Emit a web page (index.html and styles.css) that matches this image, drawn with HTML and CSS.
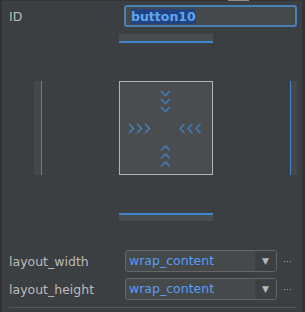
FILE: index.html
```html
<!DOCTYPE html>
<html lang="en">
<head>
<meta charset="UTF-8">
<title>Attributes</title>
<link rel="stylesheet" href="styles.css">
</head>
<body>

<div class="panel">
    <div class="top-strip"><div class="thumb"></div></div>

    <div class="id-row">
        <div class="label">ID</div>
        <div class="id-input"><span class="selected">button10</span></div>
    </div>

    <div class="widget">
        <div></div>
        <div class="bar-h bar-top"></div>
        <div></div>

        <div class="bar-v bar-left"></div>
        <div class="view-box">
            <svg width="92" height="92" viewBox="0 0 92 92">
                <g fill="none" stroke="#3f7cbd" stroke-width="1.7">
                    <polyline points="41,9 45.5,13.5 50,9"/>
                    <polyline points="41,17 45.5,21.5 50,17"/>
                    <polyline points="41,25 45.5,29.5 50,25"/>
                    <polyline points="41,68.5 45.5,64 50,68.5"/>
                    <polyline points="41,76.5 45.5,72 50,76.5"/>
                    <polyline points="41,84.5 45.5,80 50,84.5"/>
                    <polyline points="9,42 13.5,46.5 9,51"/>
                    <polyline points="17,42 21.5,46.5 17,51"/>
                    <polyline points="25,42 29.5,46.5 25,51"/>
                    <polyline points="64.5,42 60,46.5 64.5,51"/>
                    <polyline points="72.5,42 68,46.5 72.5,51"/>
                    <polyline points="80.5,42 76,46.5 80.5,51"/>
                </g>
            </svg>
        </div>
        <div class="bar-v bar-right"></div>

        <div></div>
        <div class="bar-h bar-bottom"></div>
        <div></div>
    </div>

    <div class="attrs">
        <div class="attr-row">
            <div class="label">layout_width</div>
            <div class="combo">
                <span class="combo-value">wrap_content</span>
                <span class="combo-arrow">&#9660;</span>
            </div>
            <span class="more"><i></i><i></i><i></i></span>
        </div>
        <div class="attr-row">
            <div class="label">layout_height</div>
            <div class="combo">
                <span class="combo-value">wrap_content</span>
                <span class="combo-arrow">&#9660;</span>
            </div>
            <span class="more"><i></i><i></i><i></i></span>
        </div>
    </div>

    <div class="rule"></div>
</div>

</body>
</html>
```

FILE: styles.css
```css
body {
    margin: 0;
    font-family: "DejaVu Sans", sans-serif;
    font-size: 12.5px;
    background-color: #3c3f41;
}

.panel {
    width: 300px;
    height: 312px;
    background-color: #3c3f41;
    border-left: 2px solid #2f3133;
    border-right: 3px solid #313335;
    color: #bbbbbb;
    overflow: hidden;
}

.top-strip {
    height: 1px;
    background-color: #323436;
    display: flex;
}

.top-strip .thumb {
    width: 21px;
    margin-left: 226px;
    background-color: #8a8c8e;
}

.label {
    flex: 0 0 122px;
    padding-left: 7px;
    box-sizing: border-box;
}

/* ID row */
.id-row {
    display: flex;
    align-items: center;
    margin-top: 4px;
    height: 22px;
}

.id-input {
    width: 173px;
    height: 22px;
    box-sizing: border-box;
    border: 2px solid #4a80b8;
    border-radius: 3px;
    background-color: #45494a;
    display: flex;
    align-items: center;
    padding-left: 5px;
}

.id-input .selected {
    background-color: #214283;
    color: #5ea7f0;
    line-height: 15px;
    font-weight: bold;
}

/* constraint widget */
.widget {
    display: grid;
    grid-template-columns: 8px 94px 7px;
    grid-template-rows: 9px 94px 8px;
    column-gap: 77px;
    row-gap: 38px;
    margin-top: 7px;
    padding-left: 32px;
}

.bar-h {
    background-color: #4a4d4f;
}

.bar-top {
    border-bottom: 2px solid #3f86cf;
}

.bar-bottom {
    border-top: 2px solid #3f86cf;
}

.bar-v {
    background-color: #45484a;
}

.bar-left {
    border-right: 1px solid #3f86cf;
}

.bar-right {
    border-left: 1px solid #3f86cf;
}

.view-box {
    border: 1px solid #b4b4b4;
    background-color: #4a4c4d;
}

.view-box svg {
    display: block;
}

/* attributes */
.attrs {
    margin-top: 29px;
    display: flex;
    flex-direction: column;
    gap: 6px;
}

.attr-row {
    display: flex;
    align-items: center;
    height: 22px;
}

.attr-row .label {
    flex-basis: 123px;
}

.combo {
    width: 152px;
    height: 22px;
    box-sizing: border-box;
    border: 1px solid #646667;
    border-radius: 3px;
    background-color: #45494a;
    display: flex;
    overflow: hidden;
}

.combo-value {
    flex: 1;
    color: #589df6;
    padding-left: 3px;
    line-height: 20px;
}

.combo-arrow {
    width: 21px;
    background-color: #3d4042;
    color: #b9b9b9;
    font-size: 9px;
    line-height: 20px;
    text-align: center;
}

.more {
    margin-left: 7px;
    display: flex;
    gap: 2px;
}

.more i {
    width: 1px;
    height: 1px;
    background-color: #a9a9a9;
}

.rule {
    margin: 7px 6px 0 7px;
    height: 1px;
    background-color: #54585a;
}
```
